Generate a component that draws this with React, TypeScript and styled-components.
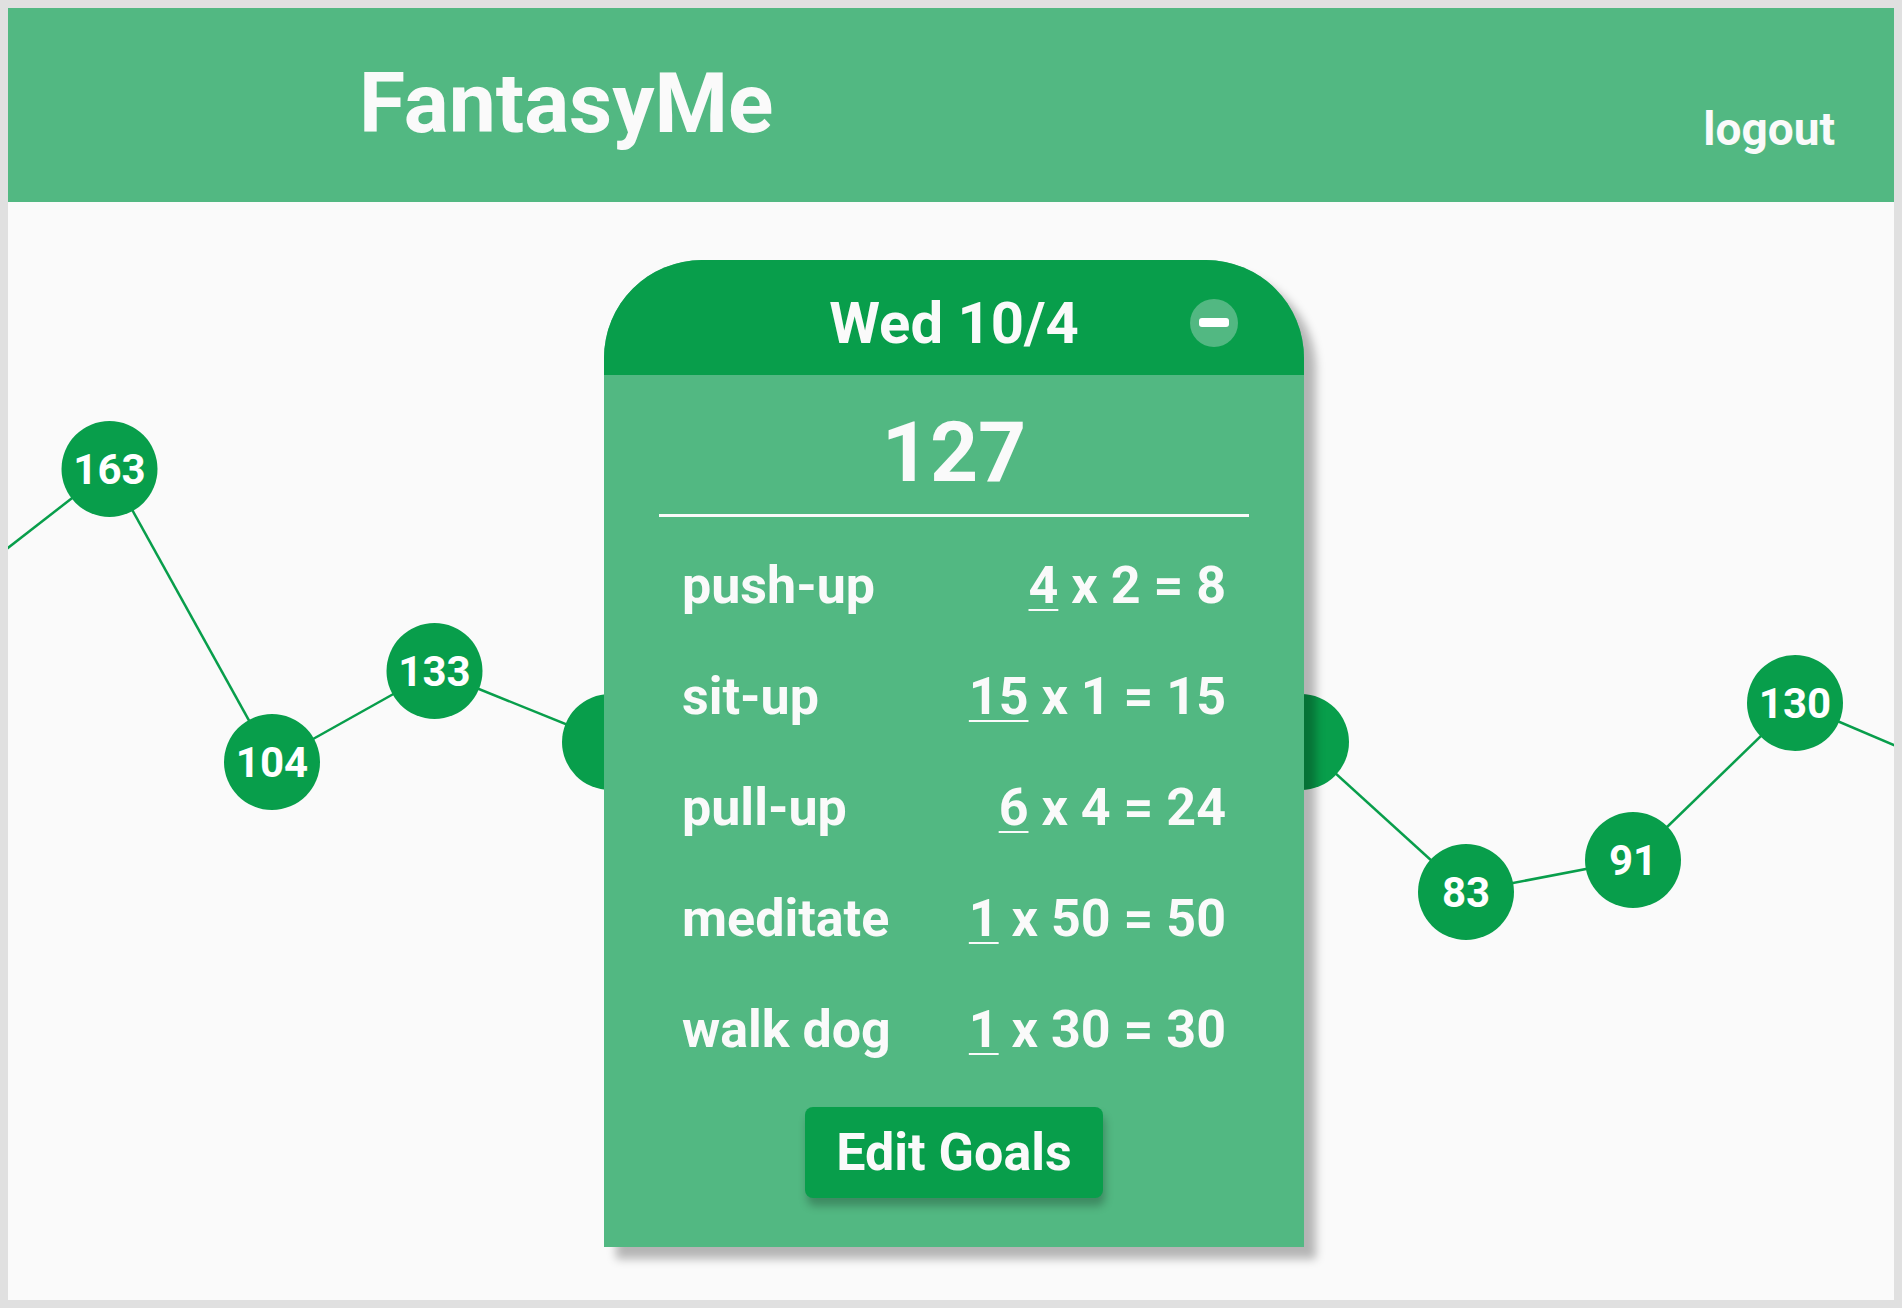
import React from "react";
import styled, { createGlobalStyle } from "styled-components";

const GlobalStyle = createGlobalStyle`
  html, body {
    margin: 0;
    padding: 0;
  }
  body {
    margin: 8px;
    background: #e0e0e0;
    font-family: Roboto, "Noto Sans", "Liberation Sans", sans-serif;
  }
`;

const LIGHT = "#52b882";
const DARK = "#089e4b";

const Page = styled.div`
  width: calc(100vw - 16px);
  height: calc(100vh - 16px);
  background: #fafafa;
  display: flex;
  flex-direction: column;
  overflow: hidden;
`;

const Header = styled.header`
  flex: 0 0 194px;
  background: ${LIGHT};
  display: flex;
  justify-content: space-between;
  align-items: center;
  padding: 0 59px 0 351px;
  box-sizing: border-box;
`;

const Brand = styled.h1`
  margin: 0;
  font-family: Roboto, "Liberation Sans", sans-serif;
  font-weight: 700;
  font-size: 84px;
  line-height: normal;
  color: #fafafa;
  margin-top: -4px;
`;

const Logout = styled.a`
  align-self: flex-end;
  margin-bottom: 46px;
  font-family: Roboto, "Liberation Sans", sans-serif;
  font-weight: 700;
  font-size: 46px;
  line-height: normal;
  color: #fafafa;
  text-decoration: none;
  cursor: pointer;
`;

const Main = styled.main`
  position: relative;
  flex: 1 1 auto;
  display: flex;
  justify-content: center;
  align-items: flex-start;
  padding: 58px 0 0 6px;
`;

const Chart = styled.svg`
  position: absolute;
  inset: 0;
  width: 100%;
  height: 100%;
  overflow: hidden;
`;

const NodeLabel = styled.text`
  font-family: Roboto, "Liberation Sans", sans-serif;
  font-weight: 700;
  font-size: 42px;
  fill: #ffffff;
`;

const Card = styled.section`
  position: relative;
  z-index: 1;
  width: 700px;
  background: ${LIGHT};
  border-radius: 98px 98px 0 0;
  box-shadow: 12px 12px 10px rgba(0, 0, 0, 0.28);
  overflow: hidden;
`;

const CardHeader = styled.div`
  height: 115px;
  box-sizing: border-box;
  padding-top: 10px;
  background: ${DARK};
  display: grid;
  grid-template-columns: 1fr auto 1fr;
  align-items: center;
`;

const DayTitle = styled.h2`
  grid-column: 2;
  margin: 0;
  font-weight: 700;
  font-size: 58px;
  line-height: normal;
  color: #fafafa;
`;

const CollapseButton = styled.button`
  grid-column: 3;
  justify-self: end;
  margin-right: 66px;
  width: 48px;
  height: 48px;
  padding: 0;
  border: none;
  border-radius: 50%;
  background: ${LIGHT};
  display: flex;
  align-items: center;
  justify-content: center;
  cursor: pointer;
`;

const MinusBar = styled.span`
  display: block;
  width: 30px;
  height: 9px;
  border-radius: 3px;
  background: #ffffff;
`;

const CardBody = styled.div`
  padding: 36px 0 49px;
  display: flex;
  flex-direction: column;
  align-items: center;
`;

const Total = styled.div`
  font-weight: 700;
  font-size: 84px;
  line-height: 84px;
  color: #fafafa;
`;

const Divider = styled.hr`
  align-self: stretch;
  margin: 19px 55px 0;
  border: none;
  height: 3px;
  background: #fafafa;
`;

const Goals = styled.ul`
  list-style: none;
  margin: 13px 0 0;
  padding: 0;
  align-self: stretch;
`;

const GoalRow = styled.li`
  display: flex;
  justify-content: space-between;
  align-items: center;
  height: 111px;
  padding: 0 78px 0 78px;
  font-weight: 700;
  font-size: 52px;
  line-height: 111px;
  color: #fafafa;
`;

const Formula = styled.span`
  white-space: pre;
`;

const Reps = styled.span`
  text-decoration: underline;
  text-decoration-thickness: 2px;
  text-underline-offset: 6px;
`;

const EditButton = styled.button`
  margin-top: 22px;
  width: 298px;
  height: 91px;
  border: none;
  border-radius: 8px;
  background: ${DARK};
  color: #fafafa;
  font-family: Roboto, "Liberation Sans", sans-serif;
  font-weight: 700;
  font-size: 52px;
  line-height: 91px;
  padding: 0;
  box-shadow: 2px 8px 9px rgba(0, 0, 0, 0.25);
  cursor: pointer;
`;

type Node = { x: number; y: number; v?: number; hidden?: boolean };

// page-space centers, shifted into the chart's coordinates
const rawNodes: Node[] = [
  { x: -54, y: 596 },
  { x: 109.5, y: 469, v: 163 },
  { x: 272, y: 762, v: 104 },
  { x: 434.5, y: 671, v: 133 },
  { x: 610, y: 742, hidden: true },
  { x: 1301, y: 742, hidden: true },
  { x: 1466, y: 892, v: 83 },
  { x: 1633, y: 860, v: 91 },
  { x: 1795, y: 703, v: 130 },
  { x: 1962, y: 774 },
];
const nodes = rawNodes.map((n) => ({ ...n, x: n.x - 8, y: n.y - 202 }));

const goals = [
  { name: "push-up", reps: 4, pts: 2 },
  { name: "sit-up", reps: 15, pts: 1 },
  { name: "pull-up", reps: 6, pts: 4 },
  { name: "meditate", reps: 1, pts: 50 },
  { name: "walk dog", reps: 1, pts: 30 },
];

export default function App() {
  return (
    <>
      <GlobalStyle />
      <Page>
        <Header>
          <Brand>FantasyMe</Brand>
          <Logout>logout</Logout>
        </Header>
        <Main>
          <Chart>
            {nodes.slice(1).map((n, i) => (
              <line
                key={`l${i}`}
                x1={nodes[i].x}
                y1={nodes[i].y}
                x2={n.x}
                y2={n.y}
                stroke={DARK}
                strokeWidth={2.5}
              />
            ))}
            {nodes.map((n, i) =>
              n.v === undefined && !n.hidden ? null : (
                <g key={`n${i}`}>
                  <circle cx={n.x} cy={n.y} r={48} fill={DARK} />
                  {n.v !== undefined && (
                    <NodeLabel x={n.x} y={n.y + 15} textAnchor="middle">
                      {n.v}
                    </NodeLabel>
                  )}
                </g>
              )
            )}
          </Chart>
          <Card>
            <CardHeader>
              <DayTitle>Wed 10/4</DayTitle>
              <CollapseButton aria-label="collapse">
                <MinusBar />
              </CollapseButton>
            </CardHeader>
            <CardBody>
              <Total>127</Total>
              <Divider />
              <Goals>
                {goals.map((g) => (
                  <GoalRow key={g.name}>
                    <span>{g.name}</span>
                    <Formula>
                      <Reps>{g.reps}</Reps>
                      {` x ${g.pts} = ${g.reps * g.pts}`}
                    </Formula>
                  </GoalRow>
                ))}
              </Goals>
              <EditButton>Edit Goals</EditButton>
            </CardBody>
          </Card>
        </Main>
      </Page>
    </>
  );
}
